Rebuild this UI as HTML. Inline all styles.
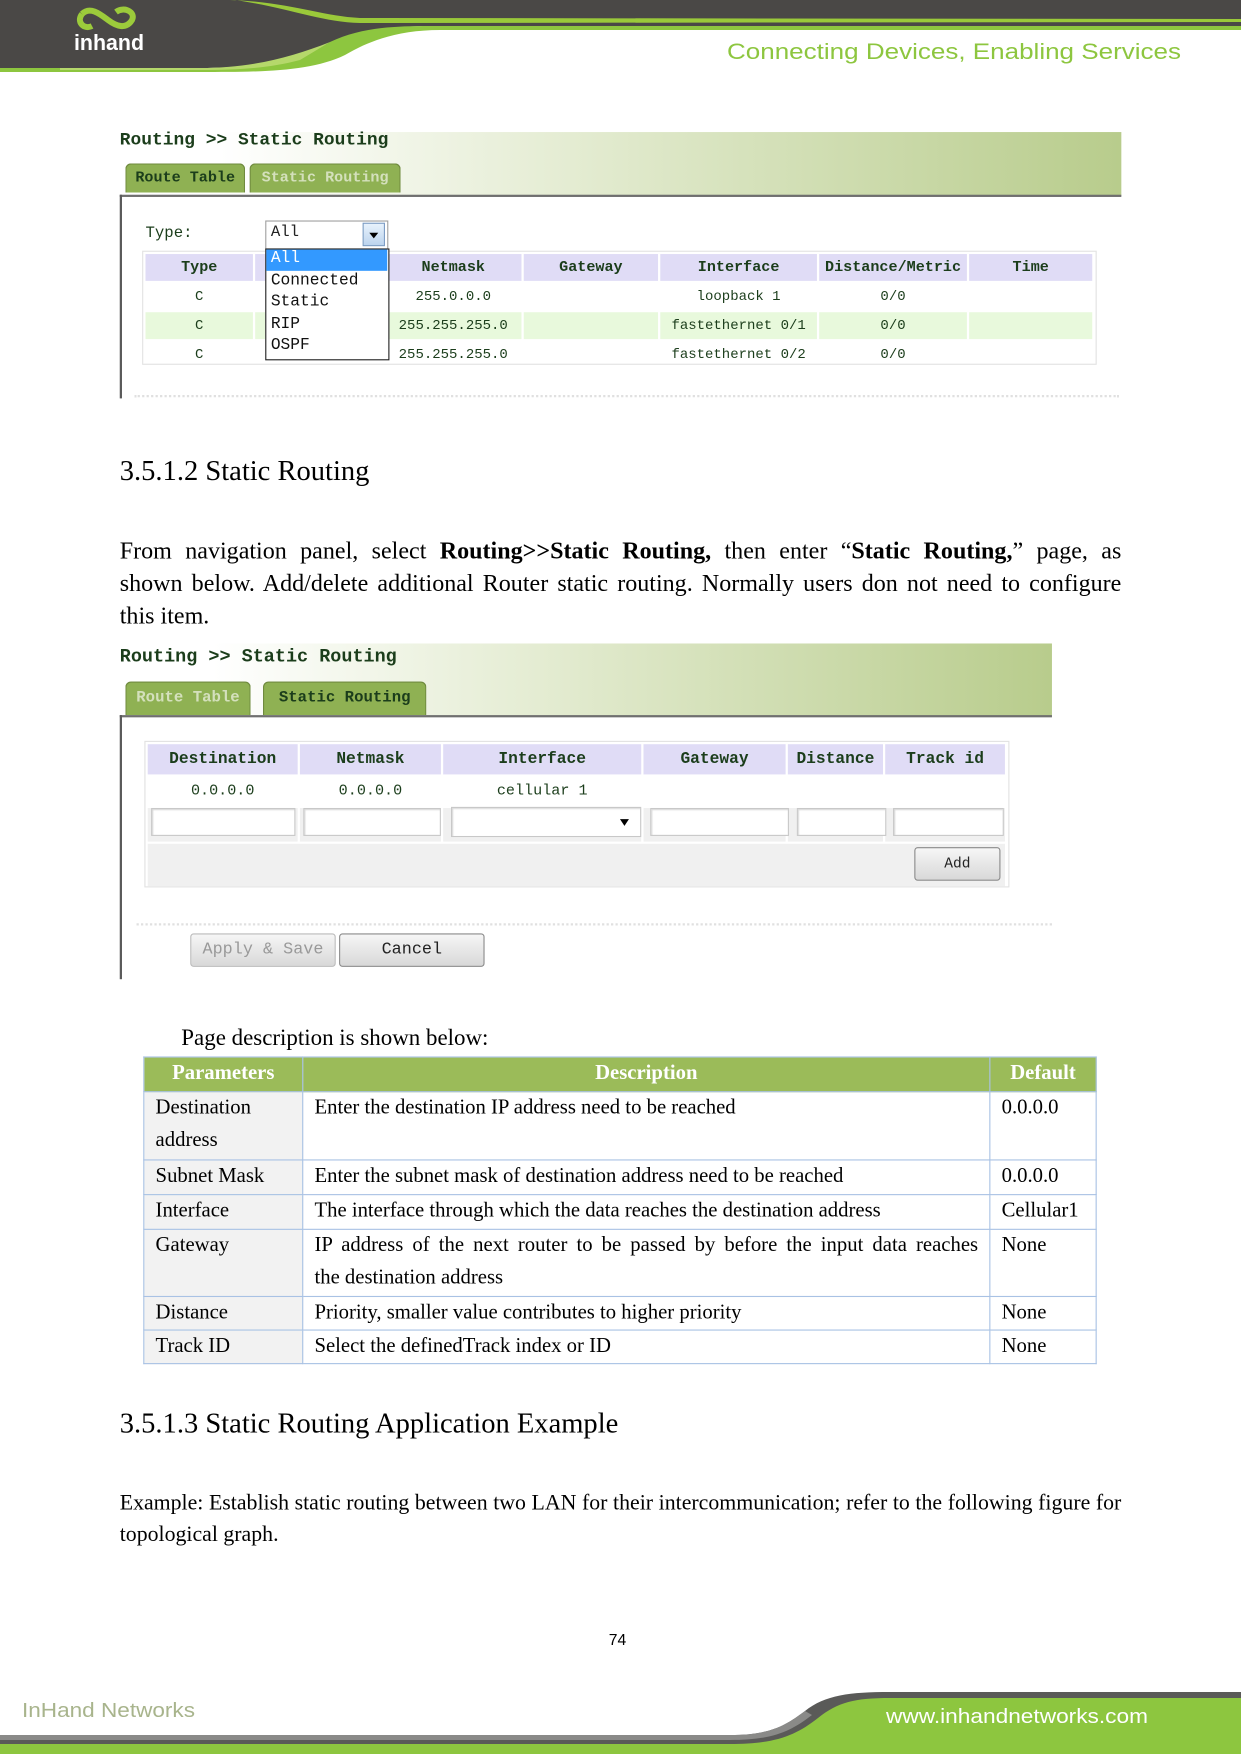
<!DOCTYPE html>
<html><head><meta charset="utf-8">
<style>
html,body{margin:0;padding:0;background:#fff;}
body{width:1241px;height:1754px;position:relative;overflow:hidden;font-family:"Liberation Serif",serif;}
#pg{position:absolute;left:0;top:0;width:1109px;height:1568px;transform:scale(1.1191);transform-origin:0 0;}
.a{position:absolute;}
.j{text-align:justify;text-align-last:justify;white-space:nowrap;}
.m{font-family:"Liberation Mono",monospace;color:#1b3d1b;}
.band{background:linear-gradient(to right,#fff 0%,#fff 10%,#e4ecd2 45%,#b8cc8c 100%);}
.tab{position:absolute;background:#8fb153;border:1px solid #6f8a3e;border-bottom:none;border-radius:5px 5px 0 0;font-family:"Liberation Mono",monospace;font-weight:bold;text-align:center;}
table.ui{border-collapse:separate;border-spacing:2px;font-family:"Liberation Mono",monospace;color:#1b3d1b;}
table.ui th{background:#e0dcf6;font-weight:bold;}
table.ui td{text-align:center;}
.inp{position:absolute;background:#fff;border:1px solid #c8c8c8;box-shadow:inset 1px 1px 1px #ddd;}
.btn{position:absolute;border:1px solid #8a8a8a;border-radius:3px;background:linear-gradient(#f6f6f6,#d8d8d8);font-family:"Liberation Mono",monospace;text-align:center;}
table.pd{position:absolute;border-collapse:collapse;font-size:18.5px;color:#000;}
table.pd td,table.pd th{border:1px solid #a9c2e4;padding:0 10px;vertical-align:top;line-height:29px;}
table.pd th{background:#9bbb59;color:#fff;font-weight:bold;text-align:center;height:30px;}
table.pd td.p{background:#f2f2f2;}
</style></head><body>
<svg class="a" style="left:0;top:0" width="1241" height="80" viewBox="0 0 1241 80">
<path d="M0 0H1241V26H430C380 26 350 34 320 48C290 62 250 68 200 68H0Z" fill="#4a4846"/>
<path d="M230 0C290 2 320 16 360 18L1241 19V22L360 23C320 22 290 8 235 0Z" fill="#9ac93a"/>
<path d="M0 68H200C260 68 300 60 330 42C360 28 390 26 430 26H1241V30H440C400 30 370 40 345 55C310 72 260 72 200 72H0Z" fill="#8dc63f"/>
<path d="M60 68H200C250 68 290 58 330 42L300 60C270 68 240 70 200 70H60Z" fill="#b5d86b"/>
<g fill="none" stroke="#9ccb3b" stroke-width="6"><path d="M82 14C90 6 100 14 108 20C116 26 126 30 132 20C136 12 124 6 116 12"/><path d="M82 14C76 22 84 30 92 26"/></g>
<text x="74" y="50" font-family="Liberation Sans,sans-serif" font-weight="bold" font-size="22" fill="#fff" textLength="70" lengthAdjust="spacingAndGlyphs">inhand</text>
<text x="727" y="59" font-family="Liberation Sans,sans-serif" font-size="22" fill="#8dc63f" textLength="454" lengthAdjust="spacingAndGlyphs">Connecting Devices, Enabling Services</text>
</svg>

<div id="pg">
<!-- screenshot 1 -->
<div class="a band" style="left:107px;top:118px;width:895px;height:57px;"></div>
<div class="a m" style="left:107px;top:116px;font-size:16px;font-weight:bold;">Routing &gt;&gt; Static Routing</div>
<div class="tab" style="left:112px;top:146px;width:105px;height:25px;line-height:25px;font-size:13.5px;color:#1b3d1b;">Route Table</div>
<div class="tab" style="left:223px;top:146px;width:133px;height:25px;line-height:25px;font-size:13.5px;color:#d4e0bc;">Static Routing</div>
<div class="a" style="left:107px;top:174px;width:895px;height:2px;background:#6f6f6f;"></div>
<div class="a" style="left:107px;top:174px;width:2px;height:182px;background:#5a5a5a;"></div>
<div class="a" style="left:120px;top:353px;width:880px;border-top:2px dotted #e0e0e0;"></div>
<div class="a m" style="left:130px;top:201px;font-size:14px;">Type:</div>
<div class="a" style="left:127px;top:224px;width:851px;height:100px;border:1px solid #e2e2e2;"></div>
<table class="ui a" style="left:128px;top:225px;width:850px;font-size:13.5px;">
<tr style="height:24px"><th style="width:94px">Type</th><th style="width:112px"></th><th style="width:120px">Netmask</th><th style="width:118px">Gateway</th><th style="width:138px">Interface</th><th style="width:130px">Distance/Metric</th><th>Time</th></tr>
<tr style="height:24px;font-size:12.5px"><td>C</td><td></td><td>255.0.0.0</td><td></td><td>loopback 1</td><td>0/0</td><td></td></tr>
<tr style="height:24px;font-size:12.5px;background:#e8f9dc"><td>C</td><td></td><td>255.255.255.0</td><td></td><td>fastethernet 0/1</td><td>0/0</td><td></td></tr>
<tr style="height:24px;font-size:12.5px"><td>C</td><td></td><td>255.255.255.0</td><td></td><td>fastethernet 0/2</td><td>0/0</td><td></td></tr>
</table>
<div class="a" style="left:237px;top:197px;width:108px;height:24px;border:1px solid #a0a0a0;background:#fff;"></div>
<div class="a m" style="left:242px;top:200px;font-size:14px;color:#222">All</div>
<div class="a" style="left:324px;top:199px;width:20px;height:21px;background:linear-gradient(#e8f2fc,#bcd4ee);border:1px solid #7a9cc4;box-sizing:border-box;"></div>
<div class="a" style="left:330px;top:208px;width:0;height:0;border-left:4px solid transparent;border-right:4px solid transparent;border-top:5px solid #000;"></div>
<div class="a" style="left:237px;top:222px;width:109px;height:98px;border:1px solid #222;background:#fff;"></div>
<div class="a" style="left:238px;top:223px;width:108px;height:19px;background:#3399ff;"></div>
<div class="a m" style="left:242px;top:222px;font-size:14.5px;line-height:19.5px;color:#111;"><span style="color:#fff">All</span><br>Connected<br>Static<br>RIP<br>OSPF</div>

<div class="a" style="left:107px;top:406px;font-size:25.5px;">3.5.1.2 Static Routing</div>
<div class="a" style="left:107px;top:478px;width:895px;font-size:21.5px;line-height:29px;">
<div class="j">From navigation panel, select <b>Routing&gt;&gt;Static Routing,</b> then enter “<b>Static Routing,</b>” page, as</div>
<div class="j">shown below. Add/delete additional Router static routing. Normally users don not need to configure</div>
<div>this item.</div></div>

<!-- screenshot 2 -->
<div class="a band" style="left:107px;top:575px;width:833px;height:65px;"></div>
<div class="a m" style="left:107px;top:577px;font-size:16.5px;font-weight:bold;">Routing &gt;&gt; Static Routing</div>
<div class="tab" style="left:112px;top:609px;width:110px;height:29px;line-height:29px;font-size:14px;color:#d4e0bc;">Route Table</div>
<div class="tab" style="left:235px;top:609px;width:144px;height:29px;line-height:29px;font-size:14px;color:#1b3d1b;">Static Routing</div>
<div class="a" style="left:107px;top:639px;width:833px;height:2px;background:#6f6f6f;"></div>
<div class="a" style="left:107px;top:639px;width:2px;height:236px;background:#5a5a5a;"></div>
<div class="a" style="left:122px;top:825px;width:818px;border-top:2px dotted #e0e0e0;"></div>
<div class="a" style="left:129px;top:662px;width:771px;height:129px;border:1px solid #e2e2e2;background:#fff;"></div>
<table class="ui a" style="left:130px;top:663px;width:770px;font-size:14.5px;">
<tr style="height:27px"><th style="width:132px">Destination</th><th style="width:124px">Netmask</th><th style="width:175px">Interface</th><th style="width:125px">Gateway</th><th style="width:83px">Distance</th><th>Track id</th></tr>
<tr style="height:26px;font-size:13.5px"><td>0.0.0.0</td><td>0.0.0.0</td><td>cellular 1</td><td></td><td></td><td></td></tr>
<tr style="height:30px;background:#f0f0f0"><td></td><td></td><td></td><td></td><td></td><td></td></tr>
<tr style="height:38px;background:#f0f0f0"><td colspan="6"></td></tr>
</table>
<div class="inp" style="left:135px;top:722px;width:127px;height:23px;"></div>
<div class="inp" style="left:271px;top:722px;width:121px;height:23px;"></div>
<div class="inp" style="left:403px;top:721px;width:168px;height:25px;"></div>
<div class="a" style="left:554px;top:732px;border-left:4px solid transparent;border-right:4px solid transparent;border-top:6px solid #000;"></div>
<div class="inp" style="left:581px;top:722px;width:122px;height:23px;"></div>
<div class="inp" style="left:712px;top:722px;width:78px;height:23px;"></div>
<div class="inp" style="left:798px;top:722px;width:97px;height:23px;"></div>
<div class="btn" style="left:817px;top:757px;width:75px;height:28px;line-height:28px;font-size:13px;color:#222;">Add</div>
<div class="btn" style="left:170px;top:834px;width:128px;height:28px;line-height:28px;font-size:15px;color:#999;border-color:#bbb;">Apply &amp; Save</div>
<div class="btn" style="left:303px;top:834px;width:128px;height:28px;line-height:28px;font-size:15px;color:#222;">Cancel</div>

<div class="a" style="left:162px;top:917px;font-size:20.5px;">Page description is shown below:</div>
<table class="pd" style="left:128px;top:944px;width:852px;">
<tr><th style="width:121px">Parameters</th><th>Description</th><th style="width:74px">Default</th></tr>
<tr style="height:61px"><td class="p">Destination<br>address</td><td>Enter the destination IP address need to be reached</td><td>0.0.0.0</td></tr>
<tr style="height:31px"><td class="p">Subnet Mask</td><td>Enter the subnet mask of destination address need to be reached</td><td>0.0.0.0</td></tr>
<tr style="height:31px"><td class="p">Interface</td><td>The interface through which the data reaches the destination address</td><td style="padding:0 0 0 10px">Cellular1</td></tr>
<tr style="height:60px"><td class="p">Gateway</td><td><div class="j">IP address of the next router to be passed by before the input data reaches</div><div>the destination address</div></td><td>None</td></tr>
<tr style="height:30px"><td class="p">Distance</td><td>Priority, smaller value contributes to higher priority</td><td>None</td></tr>
<tr style="height:30px"><td class="p">Track ID</td><td>Select the definedTrack index or ID</td><td>None</td></tr>
</table>

<div class="a" style="left:107px;top:1257px;font-size:25.5px;">3.5.1.3 Static Routing Application Example</div>
<div class="a" style="left:107px;top:1330px;width:895px;font-size:19.5px;line-height:28px;">
<div class="j">Example: Establish static routing between two LAN for their intercommunication; refer to the following figure for</div>
<div>topological graph.</div></div>
<div class="a" style="left:544px;top:1457px;font-family:'Liberation Sans',sans-serif;font-size:14px;">74</div>
</div>

<svg class="a" style="left:0;top:1680px" width="1241" height="74" viewBox="0 0 1241 74">
<path d="M0 58H730C770 58 790 50 810 35C830 18 850 14 890 14H1241V74H0Z" fill="#8dc63f"/>
<path d="M0 55H730C770 55 785 46 805 31C825 15 850 12 890 12H1241V18H890C855 18 838 22 818 38C795 56 775 64 730 64H0Z" fill="#5a5a58"/>
<path d="M0 55H730C770 55 785 46 805 31L812 35C790 52 772 60 730 60H0Z" fill="#8a8a88"/>
<text x="22" y="37" font-family="Liberation Sans,sans-serif" font-size="20" fill="#a8b48c" textLength="173" lengthAdjust="spacingAndGlyphs">InHand Networks</text>
<text x="886" y="43" font-family="Liberation Sans,sans-serif" font-size="20" fill="#fff" textLength="262" lengthAdjust="spacingAndGlyphs">www.inhandnetworks.com</text>
</svg>
</body></html>
